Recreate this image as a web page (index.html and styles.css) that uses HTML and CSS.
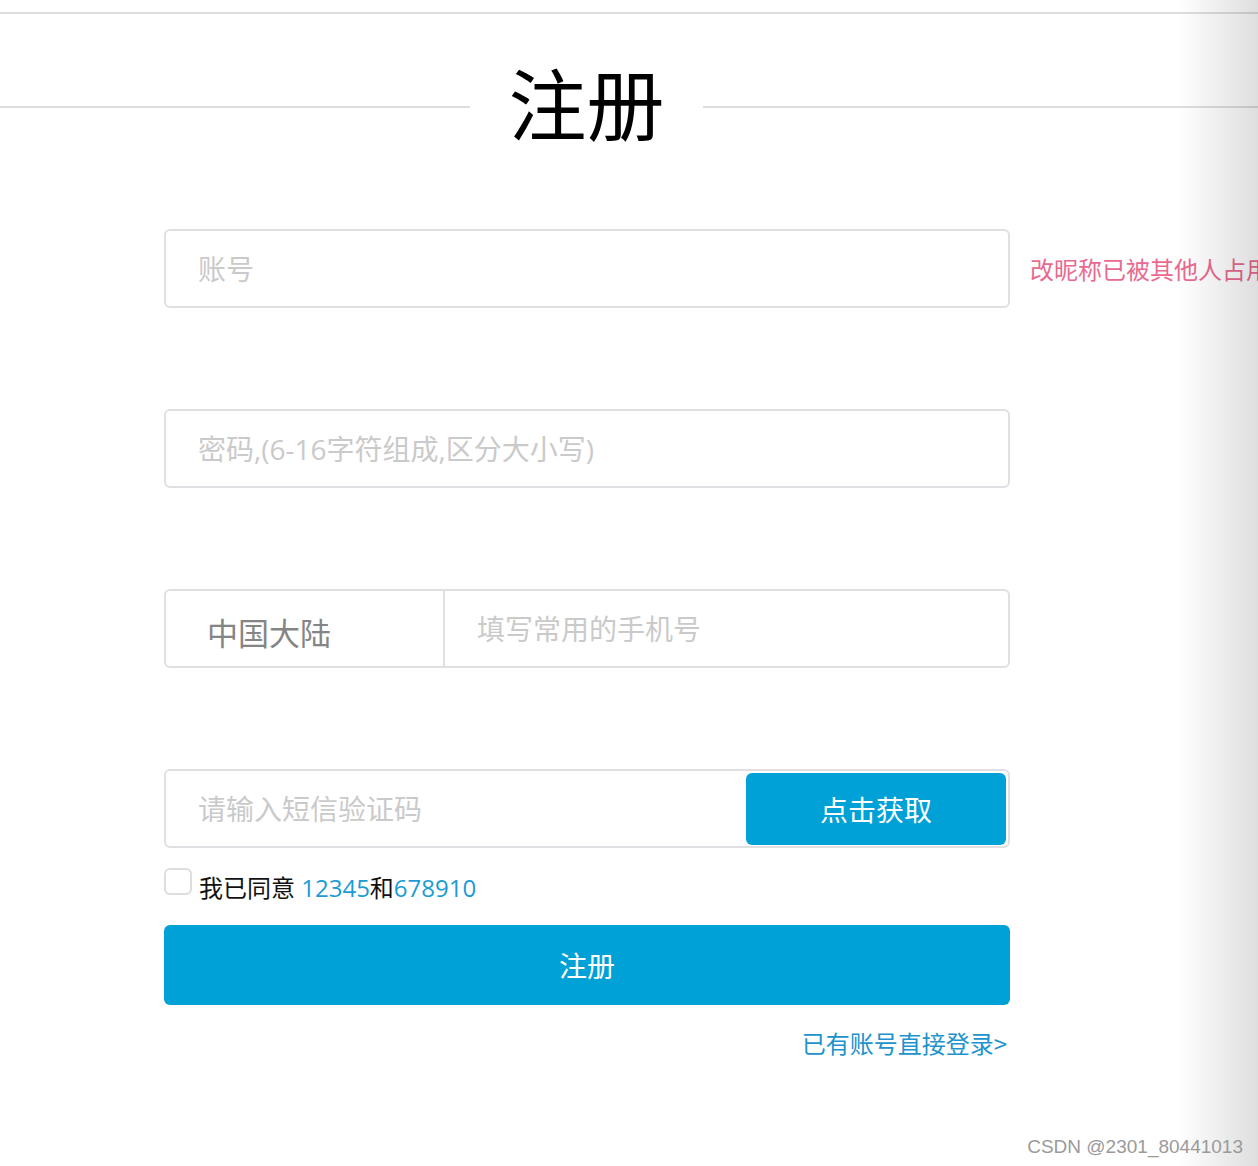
FILE: index.html
```html
<!DOCTYPE html>
<html lang="zh-CN">
<head>
    <meta charset="UTF-8">
    <meta name="viewport" content="width=device-width, initial-scale=1.0">
    <title>注册</title>
    <link rel="stylesheet" href="styles.css">
</head>
<body>
    <div class="topline"></div>

    <div class="head">
        <div class="head-line"></div>
        <h1>注册</h1>
        <div class="head-line"></div>
    </div>

    <form class="form" onsubmit="return false">
        <div class="row">
            <input class="field" type="text" placeholder="账号">
            <span class="tip">改昵称已被其他人占用</span>
        </div>

        <div class="row">
            <input class="field" type="password" placeholder="密码,(6-16字符组成,区分大小写)">
        </div>

        <div class="row">
            <div class="group">
                <div class="area">中国大陆</div>
                <input class="group-input phone" type="text" placeholder="填写常用的手机号">
            </div>
        </div>

        <div class="row">
            <div class="group code">
                <input class="group-input" type="text" placeholder="请输入短信验证码">
                <button class="btn-code" type="button">点击获取</button>
            </div>
        </div>

        <label class="agree">
            <input type="checkbox" class="check">
            <span>我已同意 <a href="#">12345</a>和<a href="#">678910</a></span>
        </label>

        <button class="btn-submit" type="submit">注册</button>

        <div class="login">
            <a href="#">已有账号直接登录&gt;</a>
        </div>
    </form>

    <div class="edge"></div>
    <div class="mark">CSDN @2301_80441013</div>
</body>
</html>
```

FILE: styles.css
```css
body {
    margin: 0;
    font-family: "Open Sans", "Noto Sans CJK SC", sans-serif;
    background-color: #fff;
    height: 1166px;
    overflow: hidden;
    position: relative;
}
.topline {
    height: 12px;
    border-bottom: 2px solid #dedede;
}
.head {
    display: grid;
    grid-template-columns: 470px 233px 1fr;
    align-items: start;
    margin-top: 37px;
}
.head-line {
    height: 2px;
    margin-top: 55px;
    background-color: #dedede;
}
h1 {
    margin: 0;
    text-align: center;
    font-family: "Noto Sans CJK SC", sans-serif;
    font-size: 78px;
    font-weight: 400;
    line-height: 100px;
    color: #000;
}
.form {
    width: 846px;
    margin-left: 164px;
    margin-top: 78px;
}
.row {
    position: relative;
    display: flex;
    align-items: center;
    margin-bottom: 101px;
}
.row:nth-child(4) {
    margin-bottom: 21px;
}
.field,
.group {
    box-sizing: border-box;
    width: 846px;
    height: 79px;
    border: 2px solid #e0e0e4;
    border-radius: 6px;
    background: #fff;
}
.field,
.group-input {
    padding: 0 0 0 32px;
    font-family: "Open Sans", "Noto Sans CJK SC", sans-serif;
    font-size: 28px;
    color: #333;
    outline: none;
}
.field::placeholder,
.group-input::placeholder {
    color: #cacaca;
}
.tip {
    position: absolute;
    left: 866px;
    white-space: nowrap;
    font-size: 24px;
    color: #e96a90;
}
.group {
    display: flex;
    align-items: center;
}
.area {
    box-sizing: border-box;
    width: 279px;
    height: 100%;
    border-right: 2px solid #e0e0e4;
    padding-left: 41px;
    display: flex;
    align-items: center;
    font-size: 31px;
    color: #858585;
    padding-top: 6px;
}
.group-input {
    flex: 1;
    height: 100%;
    border: none;
    background: transparent;
    box-sizing: border-box;
}
.phone {
    padding-left: 32px;
}
.code {
    padding-right: 2px;
}
.btn-code {
    width: 260px;
    height: 72px;
    border: none;
    border-radius: 6px;
    background-color: #00a1d6;
    color: #fff;
    font-family: "Noto Sans CJK SC", sans-serif;
    font-size: 28px;
    cursor: pointer;
}
.agree {
    display: flex;
    align-items: center;
    gap: 7px;
    font-size: 24px;
    color: #111;
    cursor: pointer;
}
.agree a {
    color: #1a9bd4;
    text-decoration: none;
}
.check {
    appearance: none;
    margin: 0;
    width: 28px;
    height: 27px;
    border: 2px solid #dcdde3;
    border-radius: 6px;
    box-sizing: border-box;
    position: relative;
    top: -5px;
}
.btn-submit {
    display: block;
    width: 846px;
    height: 80px;
    margin-top: 21px;
    border: none;
    border-radius: 6px;
    background-color: #00a1d6;
    color: #fff;
    font-family: "Noto Sans CJK SC", sans-serif;
    font-size: 28px;
    cursor: pointer;
}
.login {
    text-align: right;
    margin-top: 20px;
    padding-right: 3px;
}
.login a {
    font-family: "Noto Sans CJK SC", sans-serif;
    font-size: 24px;
    color: #2093cc;
    text-decoration: none;
}
.edge {
    position: absolute;
    top: 0;
    right: 0;
    width: 80px;
    height: 100%;
    background: linear-gradient(to right, rgba(0, 0, 0, 0), rgba(0, 0, 0, 0.13));
    pointer-events: none;
}
.mark {
    position: absolute;
    right: 15px;
    bottom: 8px;
    font-family: "Liberation Sans", Arial, sans-serif;
    font-size: 19px;
    color: #9a9a9a;
}
```
